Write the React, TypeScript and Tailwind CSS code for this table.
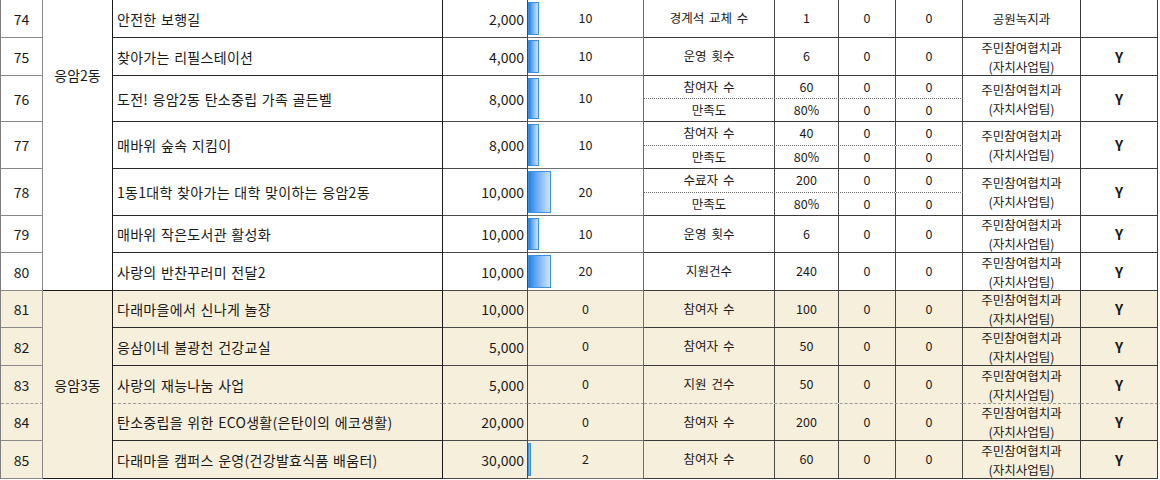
import React from 'react';

type Metric = [string, string, string, string];

type Row = {
  no: number;
  name: string;
  amt: string;
  cnt: number;
  metrics: Metric[];
  dept: string[];
  y: string;
  tan?: boolean;
  dashedBottom?: boolean;
};

const DEPT = ['주민참여협치과', '(자치사업팀)'];

const ROWS: Row[] = [
  { no: 74, name: '안전한 보행길', amt: '2,000', cnt: 10, metrics: [['경계석 교체 수', '1', '0', '0']], dept: ['공원녹지과'], y: '' },
  { no: 75, name: '찾아가는 리필스테이션', amt: '4,000', cnt: 10, metrics: [['운영 횟수', '6', '0', '0']], dept: DEPT, y: 'Y' },
  { no: 76, name: '도전! 응암2동 탄소중립 가족 골든벨', amt: '8,000', cnt: 10, metrics: [['참여자 수', '60', '0', '0'], ['만족도', '80%', '0', '0']], dept: DEPT, y: 'Y' },
  { no: 77, name: '매바위 숲속 지킴이', amt: '8,000', cnt: 10, metrics: [['참여자 수', '40', '0', '0'], ['만족도', '80%', '0', '0']], dept: DEPT, y: 'Y' },
  { no: 78, name: '1동1대학 찾아가는 대학 맞이하는 응암2동', amt: '10,000', cnt: 20, metrics: [['수료자 수', '200', '0', '0'], ['만족도', '80%', '0', '0']], dept: DEPT, y: 'Y' },
  { no: 79, name: '매바위 작은도서관 활성화', amt: '10,000', cnt: 10, metrics: [['운영 횟수', '6', '0', '0']], dept: DEPT, y: 'Y' },
  { no: 80, name: '사랑의 반찬꾸러미 전달2', amt: '10,000', cnt: 20, metrics: [['지원건수', '240', '0', '0']], dept: DEPT, y: 'Y' },
  { no: 81, name: '다래마을에서 신나게 놀장', amt: '10,000', cnt: 0, metrics: [['참여자 수', '100', '0', '0']], dept: DEPT, y: 'Y', tan: true },
  { no: 82, name: '응삼이네 불광천 건강교실', amt: '5,000', cnt: 0, metrics: [['참여자 수', '50', '0', '0']], dept: DEPT, y: 'Y', tan: true },
  { no: 83, name: '사랑의 재능나눔 사업', amt: '5,000', cnt: 0, metrics: [['지원 건수', '50', '0', '0']], dept: DEPT, y: 'Y', tan: true, dashedBottom: true },
  { no: 84, name: '탄소중립을 위한 ECO생활(은탄이의 에코생활)', amt: '20,000', cnt: 0, metrics: [['참여자 수', '200', '0', '0']], dept: DEPT, y: 'Y', tan: true },
  { no: 85, name: '다래마을 캠퍼스 운영(건강발효식품 배움터)', amt: '30,000', cnt: 2, metrics: [['참여자 수', '60', '0', '0']], dept: DEPT, y: 'Y', tan: true },
];

const App: React.FC = () => {
  return (
    <div className="bg-white w-[1160px] h-[480px] overflow-hidden font-['Noto_Sans_CJK_KR',sans-serif] text-[#1a1a1a]">
      <div className="w-[1158px] grid grid-cols-[42px_70px_330px_85px_116px_131px_64px_57px_67px_118px_77px] grid-rows-[38px_38px_46px_47px_47px_37px_38px_37px_38px_38px_37px_38px] border-l border-[#7f7f7f]">
        {ROWS.map((r, i) => {
          const bg = r.tan ? 'bg-[#f6efdb]' : 'bg-white';
          // only the bottom edge goes dashed, the verticals stay solid
          const bb = r.dashedBottom ? 'border-b [border-bottom-style:dashed] border-b-[#9a9a9a]' : 'border-b';
          return (
            <React.Fragment key={r.no}>
              <div className={`${bg} ${bb} border-r border-[#8a8a8a] flex items-center justify-center text-[14px] leading-none`}>
                {r.no}
              </div>
              {i === 0 && (
                <div className="row-span-7 bg-white border-r border-b border-[#1a1a1a] flex items-start justify-center pt-[66px] text-[14px] leading-[18px]">
                  응암2동
                </div>
              )}
              {i === 7 && (
                <div className="row-span-5 bg-[#f6efdb] border-r border-b border-[#1a1a1a] flex items-center justify-center text-[14px] leading-[18px]">
                  응암3동
                </div>
              )}
              <div className={`${bg} ${bb} border-r border-[#1a1a1a] border-b-[#2a2a2a] flex items-center px-[4px] text-[14px] leading-none whitespace-nowrap tracking-[0.3px] [word-spacing:1px]`}>
                {r.name}
              </div>
              <div className={`${bg} ${bb} border-r border-[#4a4a4a] flex items-center justify-end pr-[3px] text-[14px] leading-none`}>
                {r.amt}
              </div>
              <div className={`${bg} ${bb} border-r border-[#6f6f6f] relative flex items-center justify-center text-[12.5px] leading-none`}>
                {r.cnt > 0 && (
                  <div
                    className="absolute left-0 top-[2px] bottom-[2px] bg-linear-to-r from-[#1684ea] to-[#cfe5fb] border border-[#3a8fe0]"
                    style={{ width: Math.max(3, Math.round(r.cnt * 1.13)) }}
                  />
                )}
                <span className="relative">{r.cnt}</span>
              </div>
              <div className={`col-span-4 ${bg} ${bb} border-[#3a3a3a] flex flex-col`}>
                {r.metrics.map((m, j) => (
                  <div
                    key={j}
                    className={`flex-1 grid grid-cols-[131px_64px_57px_67px] ${j < r.metrics.length - 1 ? 'border-b border-dotted border-[#6a6a6a]' : ''}`}
                  >
                    {m.map((v, k) => (
                      <div key={k} className="border-r border-[#4a4a4a] flex items-center justify-center text-[12.5px] leading-none whitespace-nowrap [word-spacing:2px]">
                        {v}
                      </div>
                    ))}
                  </div>
                ))}
              </div>
              <div className={`${bg} ${bb} border-r border-[#3a3a3a] flex flex-col items-center justify-center text-[12.5px] leading-[19px] whitespace-nowrap`}>
                {r.dept.map((d) => (
                  <span key={d}>{d}</span>
                ))}
              </div>
              <div className={`${bg} ${bb} border-r border-[#3a3a3a] flex items-center justify-center text-[14px] font-bold leading-none`}>
                {r.y}
              </div>
            </React.Fragment>
          );
        })}
      </div>
    </div>
  );
};

export default App;
